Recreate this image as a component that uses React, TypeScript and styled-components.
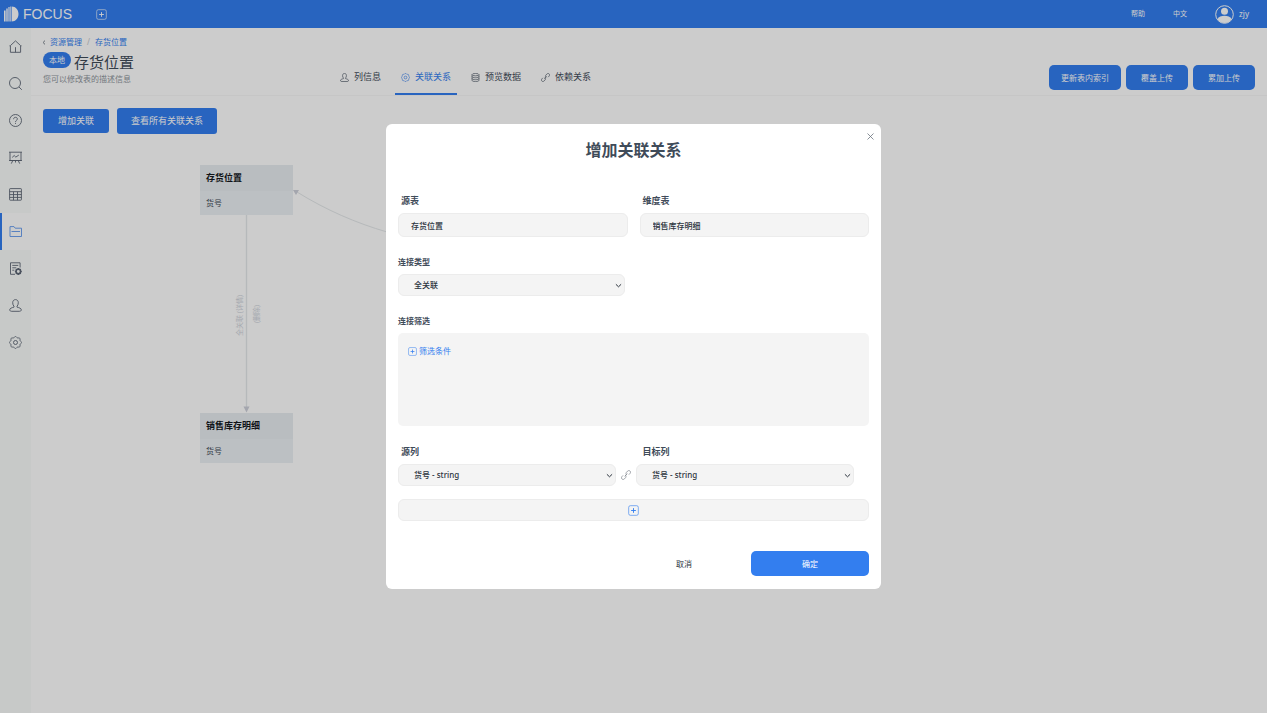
import React from "react";
import styled, { createGlobalStyle } from "styled-components";

const blue = "#337eef";
const ink = "#3f4b59";

const GlobalStyle = createGlobalStyle`
  * { box-sizing: border-box; }
  body {
    margin: 0;
    background: #fff;
    color: ${ink};
    font-family: "Noto Sans", "Noto Sans CJK SC", sans-serif;
    font-size: 8px;
    line-height: 12px;
  }
  button, input, select { font: inherit; color: inherit; margin: 0; }
  button { cursor: pointer; }
  a { color: inherit; text-decoration: none; }
  h1, h2, p { margin: 0; font-weight: 400; }
  svg { display: block; flex: none; }
`;

const Page = styled.div`
  min-height: 100vh;
  display: flex;
  flex-direction: column;
`;

const TopBar = styled.header`
  height: 28px;
  padding: 0 18px 0 4px;
  display: flex;
  align-items: center;
  background: ${blue};
  color: #fff;
`;

const Brand = styled.a`
  display: flex;
  align-items: center;
  gap: 4px;
  font-family: "Liberation Sans", Arial, sans-serif;
  font-size: 14px;
  line-height: 16px;
`;

const IconButton = styled.button<{ $tone?: string }>`
  border: 0;
  padding: 0;
  background: none;
  display: inline-flex;
  align-items: center;
  gap: 2px;
  color: ${(p) => p.$tone ?? "inherit"};
`;

const NewTab = styled(IconButton)`
  margin-left: 24px;
`;

const TopLinks = styled.nav`
  margin-left: auto;
  display: flex;
  align-items: center;
  gap: 28px;
  font-size: 7px;
`;

const Account = styled.a`
  display: flex;
  align-items: center;
  gap: 5px;
  font-size: 8px;
`;

const Body = styled.div`
  flex: 1;
  display: flex;
`;

const Sidebar = styled.nav`
  width: 31px;
  flex: none;
  background: #f9fcfb;
`;

const SideItem = styled.a<{ $active?: boolean }>`
  height: 37px;
  display: flex;
  align-items: center;
  padding-left: 7px;
  border-left: 2px solid ${(p) => (p.$active ? blue : "transparent")};
  background: ${(p) => (p.$active ? "#fff" : "transparent")};
  color: ${(p) => (p.$active ? "#5f97ee" : "#5d6675")};
`;

const Main = styled.main`
  flex: 1;
  min-width: 0;
  display: flex;
  flex-direction: column;
`;

const PageHead = styled.div`
  padding: 8px 12px 0;
  display: flex;
  align-items: flex-end;
  border-bottom: 1px solid #f8f8f8;
`;

const HeadText = styled.div`
  width: 291px;
  padding-bottom: 10px;
`;

const Crumbs = styled.nav`
  display: flex;
  align-items: center;
  color: ${blue};
  gap: 5px;
`;

const Slash = styled.span`
  color: #c3c8ce;
`;

const TitleRow = styled.div`
  display: flex;
  align-items: center;
  gap: 3px;
  margin-top: 2px;
  height: 23px;
`;

const Badge = styled.span`
  width: 28px;
  height: 16px;
  line-height: 16px;
  margin-bottom: 4px;
  border-radius: 8px;
  background: ${blue};
  color: #fff;
  text-align: center;
`;

const PageTitle = styled.h1`
  font-size: 15px;
  line-height: 22px;
`;

const Description = styled.p`
  color: #8f959d;
`;

const Tabs = styled.div`
  display: flex;
  gap: 8px;
`;

const Tab = styled.button<{ $active?: boolean }>`
  height: 34px;
  padding: 0 6px;
  border: 0;
  border-bottom: 2px solid ${(p) => (p.$active ? blue : "transparent")};
  background: none;
  display: flex;
  align-items: center;
  gap: 5px;
  font-size: 9px;
  white-space: nowrap;
  color: ${(p) => (p.$active ? blue : ink)};
`;

const Actions = styled.div`
  margin: 0 0 5px auto;
  display: flex;
  gap: 5px;
`;

const Primary = styled.button`
  height: 25px;
  min-width: 62px;
  padding: 0 12px;
  border: 0;
  border-radius: 5px;
  background: ${blue};
  color: #fff;
  white-space: nowrap;
`;

const Toolbar = styled.div`
  display: flex;
  align-items: center;
  gap: 8px;
  padding: 12px 12px 0;
`;

const ToolButton = styled(Primary)<{ $large?: boolean }>`
  height: ${(p) => (p.$large ? 26 : 24)}px;
  padding: 0 ${(p) => (p.$large ? 14 : 15)}px;
  border-radius: 3px;
  font-size: 9px;
`;

const Canvas = styled.section`
  flex: 1;
  position: relative;
  min-height: 340px;
  overflow: hidden;
`;

const Edges = styled.svg`
  position: absolute;
  inset: 0;
  width: 100%;
  height: 100%;
`;

const TableNode = styled.div<{ $x: number; $y: number }>`
  position: absolute;
  left: ${(p) => p.$x}px;
  top: ${(p) => p.$y}px;
  width: 93px;
  background: #ecf1f4;
`;

const NodeName = styled.div`
  padding: 0 6px;
  line-height: 26px;
  font-size: 9px;
  font-weight: 700;
  color: #14181d;
  background: #e8edf1;
`;

const NodeColumn = styled.div`
  padding: 0 6px;
  line-height: 24px;
`;

const Backdrop = styled.div`
  position: fixed;
  inset: 0;
  display: grid;
  place-items: center;
  background: rgba(0, 0, 0, 0.2);
`;

const Dialog = styled.form`
  position: relative;
  width: 495px;
  max-width: 100%;
  padding: 14px 12px 13px;
  border-radius: 6px;
  background: #fff;
`;

const DialogTitle = styled.h2`
  margin-bottom: 33px;
  font-size: 16px;
  line-height: 24px;
  font-weight: 700;
  text-align: center;
`;

const Close = styled(IconButton)`
  position: absolute;
  top: 9px;
  right: 7px;
`;

const Pair = styled.div`
  display: grid;
  grid-template-columns: 1fr 1fr;
  column-gap: 12px;
`;

const Label = styled.label<{ $inset?: boolean }>`
  display: block;
  margin-bottom: 6px;
  padding-left: ${(p) => (p.$inset ? 3 : 0)}px;
  font-size: ${(p) => (p.$inset ? 9 : 8)}px;
  font-weight: 600;
`;

const Section = styled.div<{ $gap?: number }>`
  margin-top: ${(p) => p.$gap ?? 19}px;
`;

const TextField = styled.input`
  display: block;
  width: 100%;
  height: 24px;
  padding: 0 12px;
  border: 1px solid #ececec;
  border-radius: 6px;
  background: #f4f4f4;
  font-weight: 500;
  color: #2b333d;
`;

const SelectBox = styled.div<{ $width: number }>`
  position: relative;
  width: ${(p) => p.$width}px;
  svg {
    position: absolute;
    right: 3px;
    top: 8px;
    pointer-events: none;
  }
`;

const SelectField = styled.select`
  appearance: none;
  display: block;
  width: 100%;
  height: 22px;
  padding: 0 15px;
  border: 1px solid #ececec;
  border-radius: 6px;
  background: #f4f4f4;
  font-weight: 500;
  color: #2b333d;
`;

const FilterBox = styled.div`
  height: 93px;
  padding: 12px 10px;
  border-radius: 5px;
  background: #f4f4f4;
`;

const JoinRow = styled.div`
  display: flex;
  align-items: center;
  gap: 5px;
  color: #777d86;
`;

const AddRow = styled.button`
  width: 100%;
  height: 22px;
  margin-top: 13px;
  border: 1px solid #ececec;
  border-radius: 6px;
  background: #f4f4f4;
  color: ${blue};
  display: flex;
  align-items: center;
  justify-content: center;
`;

const Footer = styled.div`
  margin-top: 30px;
  display: flex;
  justify-content: flex-end;
  gap: 8px;
`;

const Confirm = styled(Primary)`
  width: 118px;
`;

const Cancel = styled(Confirm)`
  background: none;
  color: #2b333d;
`;

const Icon = ({ size = 13, children }: { size?: number; children: React.ReactNode }) => (
  <svg width={size} height={size} viewBox="0 0 13 13" fill="none" stroke="currentColor" strokeWidth="0.9" aria-hidden="true">
    {children}
  </svg>
);

/* Cog outline: a circle whose radius swells once per tooth. */
const cogOutline = (teeth: number, radius: number, depth: number) =>
  Array.from({ length: 97 }, (_, i) => {
    const angle = (i / 96) * Math.PI * 2;
    const r = radius + depth * Math.cos(teeth * angle);
    const x = (6.5 + r * Math.cos(angle)).toFixed(2);
    const y = (6.5 + r * Math.sin(angle)).toFixed(2);
    return `${i ? "L" : "M"}${x} ${y}`;
  }).join("") + "Z";

const Cog = () => (
  <>
    <path d={cogOutline(8, 5.5, 0.5)} strokeLinejoin="round" />
    <circle cx="6.5" cy="6.5" r="2" />
  </>
);

const UserShape = () => (
  <path d="M6.5.6C4.7.6 3.7 2 3.7 3.7c0 1.600.5 2.800 1.300 3.600v.8C3 8.700.7 9.300.7 10.800c0 1 .8 1.500 2 1.500h7.600c1.200 0 2-.5 2-1.500 0-1.500-2.300-2.100-4.300-2.700v-.8c.8-.8 1.300-2 1.300-3.600C9.300 2 8.300.6 6.500.6z" />
);

const PlusBox = ({ size }: { size: number }) => (
  <Icon size={size}>
    <rect x="0.8" y="0.8" width="11.4" height="11.4" rx="2" strokeWidth="1.1" opacity=".65" />
    <path d="M6.5 3.700v5.600M3.700 6.500h5.600" strokeWidth="1.1" />
  </Icon>
);

const LinkIcon = ({ size = 9 }: { size?: number }) => (
  <Icon size={size}>
    <path d="M7.300 6.300C6.300 5.300 6.200 4 7.100 3L8.500 1.500c1-1 2.300-1 3.200-.2s.9 2.200 0 3.200L10.300 6M5.700 6.700c1 1 1.100 2.300.2 3.300l-1.400 1.500c-1 1-2.300 1-3.200.2s-.9-2.200 0-3.200L2.700 7M4.800 8.300l3.400-3.600" />
  </Icon>
);

const Chevron = () => (
  <svg width="7" height="7" viewBox="0 0 7 7" fill="none" stroke="#2b333d" strokeWidth="1" aria-hidden="true">
    <path d="M.9 2.300 3.500 4.800 6.100 2.300" />
  </svg>
);

const sideIcons: { name: string; art: React.ReactNode }[] = [
  { name: "首页", art: <path d="M.5 5.800h.9V12.300h10.200V5.800h.9M1.400 5.600 6.500.9l5.100 4.700M6.500 7.200v5.100" /> },
  { name: "搜索", art: <><circle cx="6" cy="6" r="5.500" /><path d="m10 10 2.800 2.800" /></> },
  { name: "帮助", art: <><circle cx="6.5" cy="6.500" r="6" /><path d="M4.600 5.200c0-1.200.8-1.900 1.900-1.900s1.900.7 1.900 1.700c0 1.300-1.900 1.400-1.900 2.900M6.500 8.900v1" /></> },
  { name: "看板", art: <path d="M0 1.200h13M1 1.200v8.300h11V1.200M0 9.500h13M3.200 6.400 5.200 4.500l1.600 1.600 3-2M3.800 9.500 2.300 12.600M9.200 9.500l1.500 3.100M6.500 9.500v2" /> },
  { name: "表格", art: <><rect x=".6" y=".6" width="11.800" height="11.600" rx=".6" /><path d="M.6 3.700h11.800M.6 6.600h11.800M.6 9.400h11.800M4.500 3.700v8.500M8.500 3.700v8.500" /></> },
  { name: "资源", art: <path d="M1 11.500V1.600h4l1.200 1.600h6.300v8.300zM2.500 6.500h8.500" /> },
  { name: "日志", art: <><path d="M6 12.300H1.500V.8h9.600v4.700M3.300 3.400h6M3.300 5.800h4M3.300 8.200h2" /><circle cx="9.300" cy="9.500" r="2.300" strokeWidth="1.700" /><path d="M9.300 5.900v1M9.300 12v1M5.900 9.500h1M11.700 9.500h1M6.900 7.100l.7.7M11 11.200l.7.7M11.700 7.100l-.7.7M7.600 11.200l-.7.7" strokeWidth="1.200" /></> },
  { name: "用户", art: <UserShape /> },
  { name: "设置", art: <Cog /> },
];

export default function App() {
  return (
    <>
      <GlobalStyle />
      <Page>
        <TopBar>
          <Brand href="#">
            <svg width="15" height="16" viewBox="0 0 15 16" fill="#fff" aria-hidden="true">
              <path d="M0 4.500h1.600v11H0zM2.300 2.500h1.400v13H2.300zM4.400 1h1.200v14.500H4.400zM6.300.5h.8v15h-.8zM7.700.5c4 0 6.800 3.200 6.800 7.500s-2.800 7.500-6.800 7.500z" />
            </svg>
            FOCUS
          </Brand>
          <NewTab type="button" aria-label="新建">
            <PlusBox size={11} />
          </NewTab>
          <TopLinks>
            <a href="#help">帮助</a>
            <a href="#lang">中文</a>
            <Account href="#account">
              <svg width="19" height="19" viewBox="0 0 19 19" aria-hidden="true">
                <circle cx="9.500" cy="9.500" r="8.800" fill="none" stroke="#fff" strokeWidth="1" />
                <circle cx="9.500" cy="6.300" r="3.500" fill="#fff" />
                <path d="M2.500 14c1.200-2.200 3.800-3.300 7-3.300s5.800 1.100 7 3.300c-1.400 2.400-4 4-7 4s-5.600-1.600-7-4z" fill="#fff" />
              </svg>
              zjy
            </Account>
          </TopLinks>
        </TopBar>

        <Body>
          <Sidebar>
            {sideIcons.map((item) => (
              <SideItem key={item.name} href="#" aria-label={item.name} $active={item.name === "资源"}>
                <Icon>{item.art}</Icon>
              </SideItem>
            ))}
          </Sidebar>

          <Main>
            <PageHead>
              <HeadText>
                <Crumbs>
                  <svg width="2" height="5" viewBox="0 0 2 5" fill="none" stroke={ink} strokeWidth=".7" aria-hidden="true">
                    <path d="M1.900.4.4 2.500l1.500 2.100" />
                  </svg>
                  <a href="#resources">资源管理</a>
                  <Slash>/</Slash>
                  <a href="#table">存货位置</a>
                </Crumbs>
                <TitleRow>
                  <Badge>本地</Badge>
                  <PageTitle>存货位置</PageTitle>
                </TitleRow>
                <Description>您可以修改表的描述信息</Description>
              </HeadText>
              <Tabs>
                <Tab type="button">
                  <Icon size={9}><UserShape /></Icon>
                  列信息
                </Tab>
                <Tab type="button" $active>
                  <Icon size={9}><Cog /></Icon>
                  关联关系
                </Tab>
                <Tab type="button">
                  <Icon size={9}>
                    <ellipse cx="6.500" cy="2.400" rx="5" ry="1.700" />
                    <path d="M1.500 2.400v8.300c0 .9 2.200 1.700 5 1.700s5-.8 5-1.700V2.400M1.500 5.200c0 .9 2.200 1.700 5 1.700s5-.8 5-1.700M1.500 8c0 .9 2.200 1.700 5 1.700s5-.8 5-1.700" />
                  </Icon>
                  预览数据
                </Tab>
                <Tab type="button">
                  <LinkIcon />
                  依赖关系
                </Tab>
              </Tabs>
              <Actions>
                <Primary type="button">更新表内索引</Primary>
                <Primary type="button">覆盖上传</Primary>
                <Primary type="button">累加上传</Primary>
              </Actions>
            </PageHead>

            <Toolbar>
              <ToolButton type="button">增加关联</ToolButton>
              <ToolButton type="button" $large>查看所有关联关系</ToolButton>
            </Toolbar>

            <Canvas>
              <Edges>
                <g fill="none" stroke="#e4e8ea" strokeWidth="1">
                  <path d="M215.500 80v194" strokeWidth="1.300" />
                  <path d="M266 58C295 76 325 89 356 98S440 112 470 114" />
                </g>
                <g fill="#cdd0da">
                  <path d="M212.500 272.500h6l-3 6z" />
                  <path d="M262 56h6l-3 5z" />
                </g>
                <g fill="#cfd4dc" fontSize="7">
                  <text transform="translate(211 202) rotate(-90)">全关联 (详情)</text>
                  <text transform="translate(228 189) rotate(-90)">(删除)</text>
                </g>
              </Edges>
              <TableNode $x={169} $y={31}>
                <NodeName>存货位置</NodeName>
                <NodeColumn>货号</NodeColumn>
              </TableNode>
              <TableNode $x={169} $y={279}>
                <NodeName>销售库存明细</NodeName>
                <NodeColumn>货号</NodeColumn>
              </TableNode>
            </Canvas>
          </Main>
        </Body>
      </Page>

      <Backdrop>
        <Dialog role="dialog" aria-labelledby="dialog-title">
          <Close type="button" aria-label="关闭" $tone="#6b737d">
            <svg width="7" height="7" viewBox="0 0 7 7" stroke="currentColor" strokeWidth=".8" aria-hidden="true">
              <path d="m.5.5 6 6M6.500.5l-6 6" />
            </svg>
          </Close>
          <DialogTitle id="dialog-title">增加关联关系</DialogTitle>
          <Pair>
            <div>
              <Label htmlFor="source-table" $inset>源表</Label>
              <TextField id="source-table" defaultValue="存货位置" />
            </div>
            <div>
              <Label htmlFor="dimension-table" $inset>维度表</Label>
              <TextField id="dimension-table" defaultValue="销售库存明细" />
            </div>
          </Pair>
          <Section>
            <Label htmlFor="join-type">连接类型</Label>
            <SelectBox $width={227}>
              <SelectField id="join-type"><option>全关联</option></SelectField>
              <Chevron />
            </SelectBox>
          </Section>
          <Section>
            <Label as="div">连接筛选</Label>
            <FilterBox>
              <IconButton type="button" $tone={blue}>
                <PlusBox size={9} />
                筛选条件
              </IconButton>
            </FilterBox>
          </Section>
          <Section $gap={20}>
            <Pair>
              <Label htmlFor="source-column" $inset>源列</Label>
              <Label htmlFor="target-column" $inset>目标列</Label>
            </Pair>
            <JoinRow>
              <SelectBox $width={218}>
                <SelectField id="source-column"><option>货号 - string</option></SelectField>
                <Chevron />
              </SelectBox>
              <LinkIcon size={10} />
              <SelectBox $width={218}>
                <SelectField id="target-column"><option>货号 - string</option></SelectField>
                <Chevron />
              </SelectBox>
            </JoinRow>
          </Section>
          <AddRow type="button" aria-label="添加">
            <PlusBox size={11} />
          </AddRow>
          <Footer>
            <Cancel type="button">取消</Cancel>
            <Confirm type="submit">确定</Confirm>
          </Footer>
        </Dialog>
      </Backdrop>
    </>
  );
}
